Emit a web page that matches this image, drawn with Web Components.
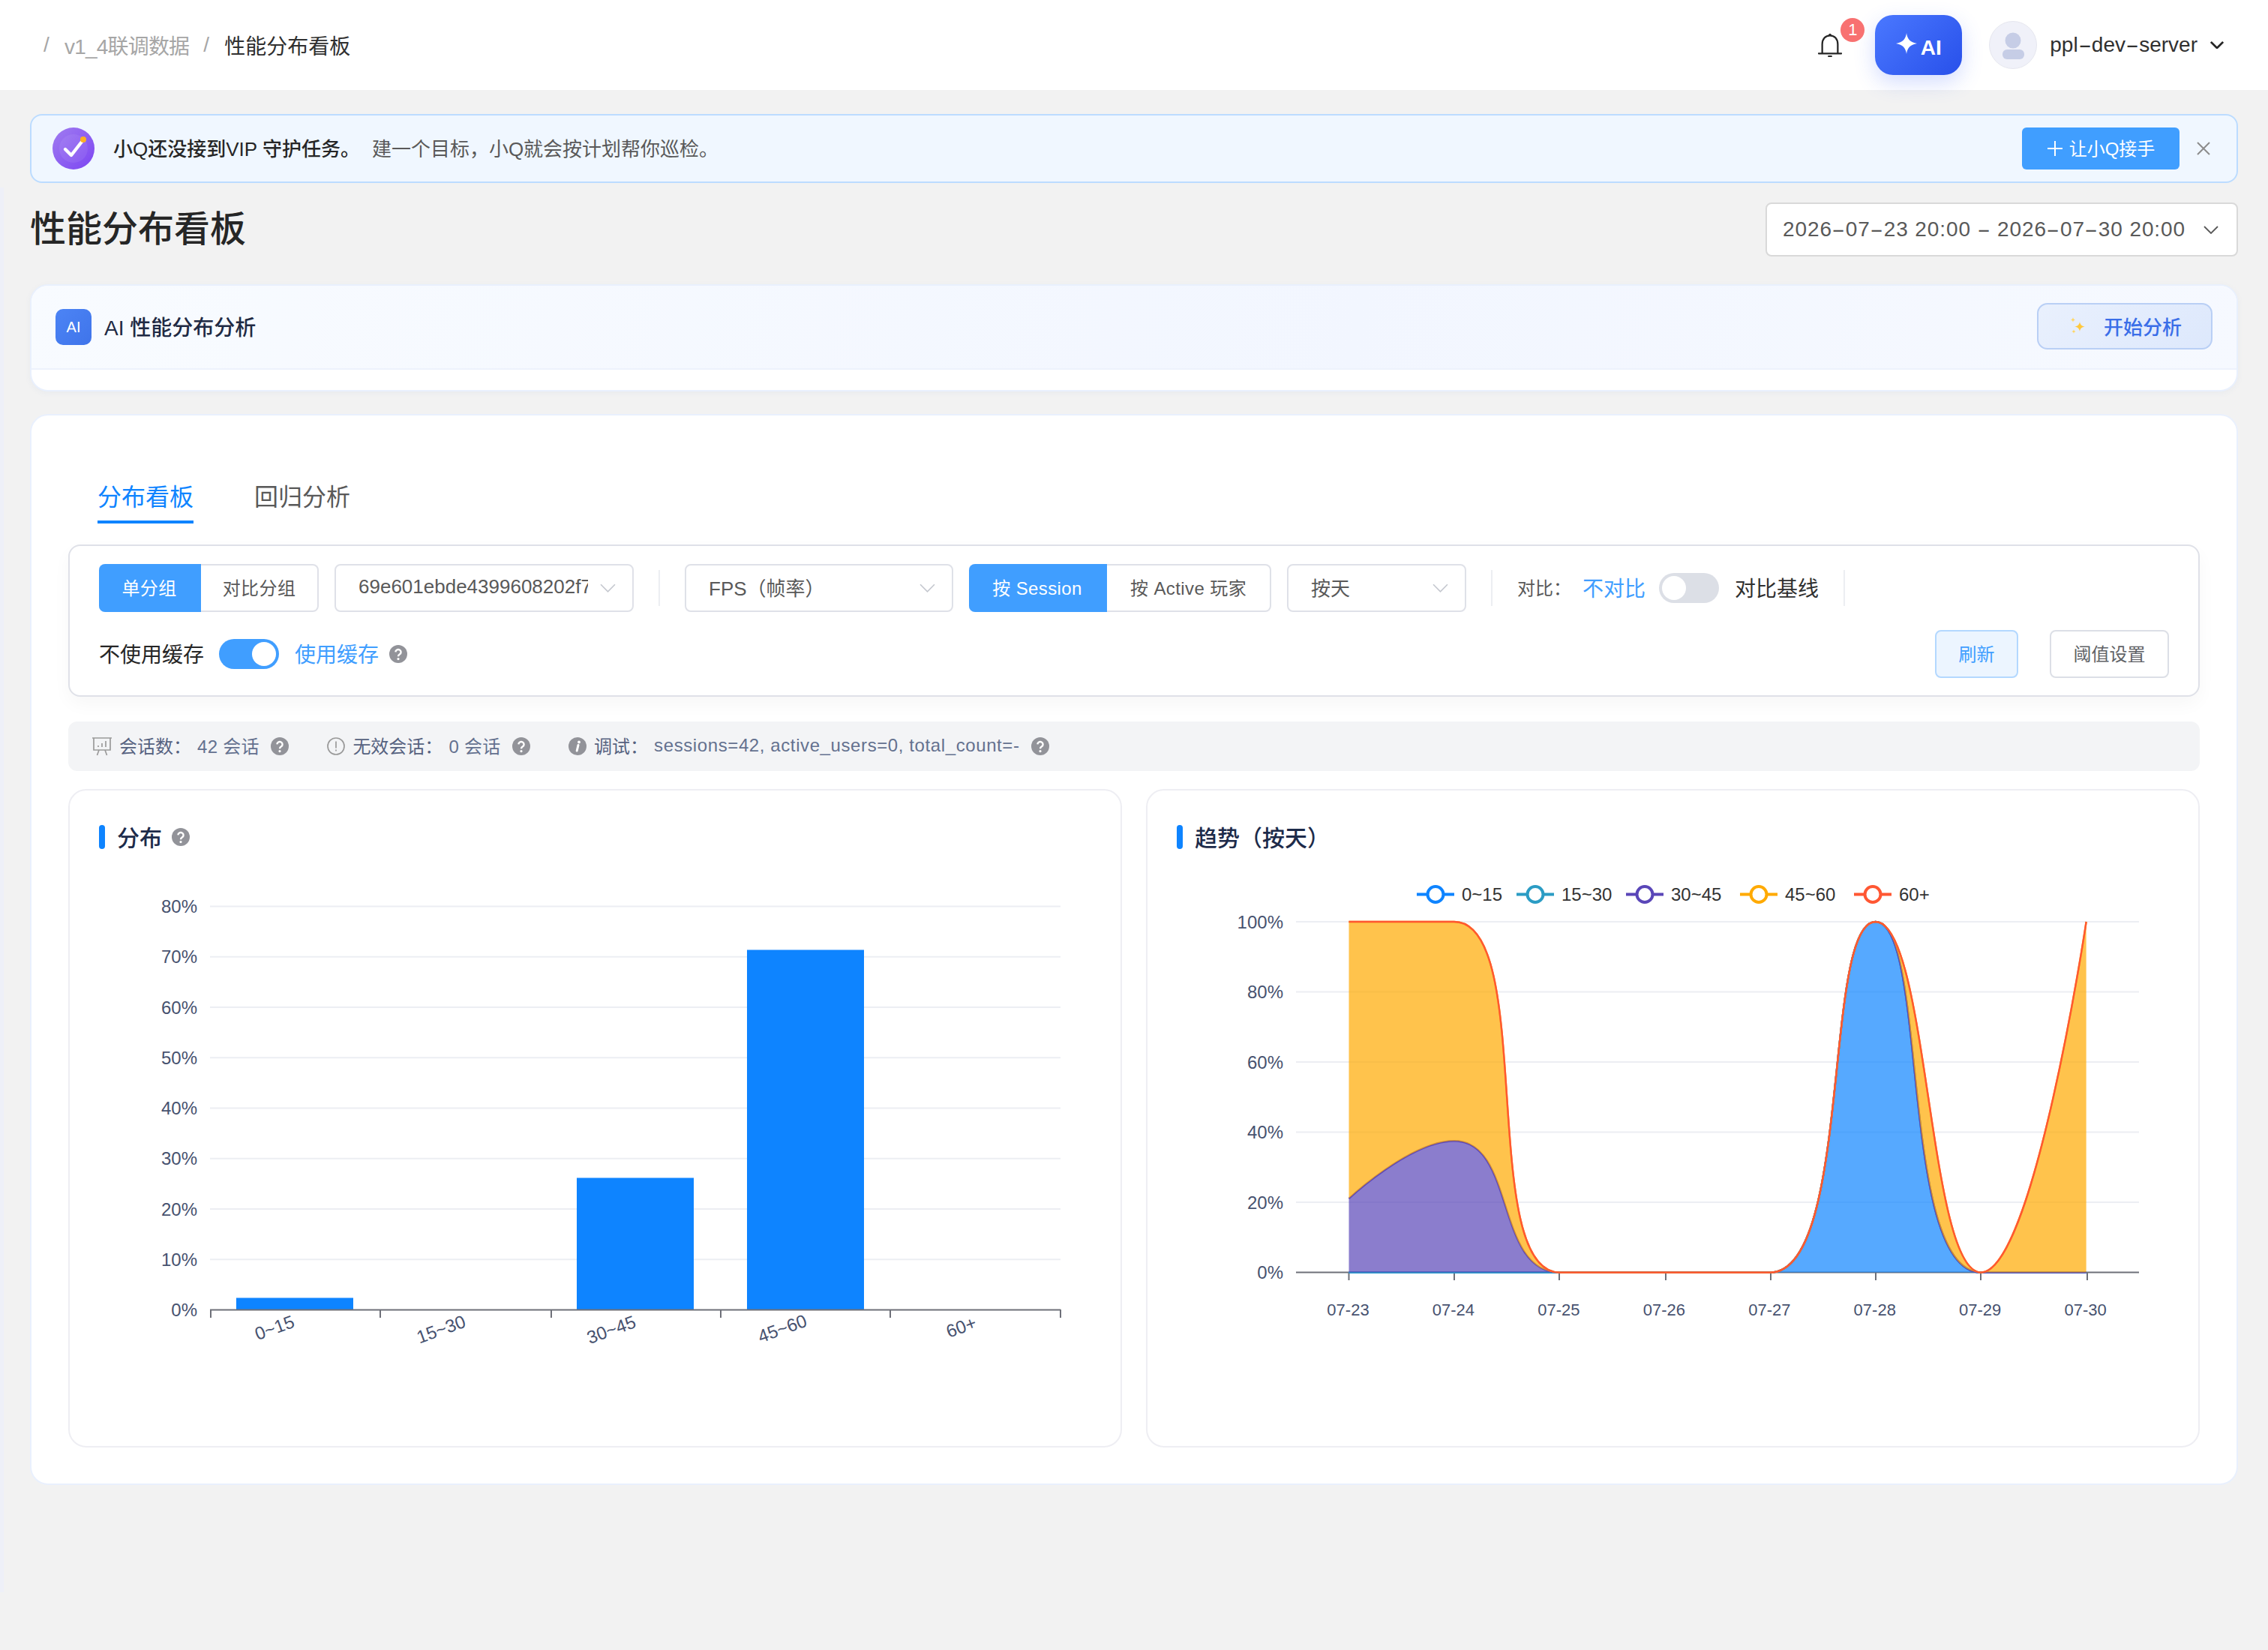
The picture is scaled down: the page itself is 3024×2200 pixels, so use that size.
<!DOCTYPE html>
<html lang="zh-CN">
<head>
<meta charset="utf-8">
<title>性能分布看板</title>
<style>
html,body{margin:0;padding:0;background:#f2f2f2}
body{font-family:"Liberation Sans","Noto Sans CJK SC",sans-serif;font-size:24px;color:#262626}
</style>
</head>
<body>
<app-shell>
  <top-bar></top-bar>
  <notice-banner></notice-banner>
  <page-head></page-head>
  <ai-card></ai-card>
  <panel-card>
    <ui-tabs></ui-tabs>
    <filter-box></filter-box>
    <stats-bar></stats-bar>
    <chart-row>
      <chart-card title-text="分布" help><bar-chart></bar-chart></chart-card>
      <chart-card title-text="趋势（按天）"><trend-chart></trend-chart></chart-card>
    </chart-row>
  </panel-card>
</app-shell>
<script>
const HELP = s => `<svg width="${s}" height="${s}" viewBox="0 0 24 24" style="flex:none;display:block"><circle cx="12" cy="12" r="12" fill="#929399"/><path d="M8.4 9.4a3.6 3.4 0 1 1 5.6 2.9c-1.3.8-2 1.4-2 2.9" fill="none" stroke="#fff" stroke-width="2.4"/><circle cx="12" cy="18.6" r="1.6" fill="#fff"/></svg>`;
const CHEV = (w,c,sw=2) => `<svg width="${w}" height="${Math.round(w*.56)}" viewBox="0 0 20 11" style="flex:none;display:block"><path d="M1 1l9 9 9-9" fill="none" stroke="${c}" stroke-width="${sw}"/></svg>`;
function def(name, css, html, extra){
  customElements.define(name, class extends HTMLElement{
    constructor(){super();const r=this.attachShadow({mode:'open'});
      r.innerHTML=`<style>${css}</style>`+(typeof html==='function'?html(this):html);}
    connectedCallback(){ if(extra) extra(this); }
  });
}

def('app-shell',`:host{display:block;width:3024px;min-height:2200px;background:linear-gradient(#eef0f8,#eef0f8) 0 250px/5px 1873px no-repeat #f2f2f2}
`,`<slot></slot>`);

def('top-bar',`:host{display:flex;align-items:center;height:120px;background:#fff;position:relative;z-index:1;font-size:28px}
.crumbs{display:flex;align-items:center;margin-left:58px;color:#a6a6a6;flex:1}
.s{width:12px;margin-right:16px}.s+span{margin-right:19px}
.v{letter-spacing:-.8px}
.cur{color:#303030}
.bell{position:relative;width:42px;height:40px;margin-right:40px}
.badge{position:absolute;left:32px;top:-16px;width:32px;height:32px;border-radius:50%;background:#f87171;color:#fff;font-size:22px;display:flex;align-items:center;justify-content:center}
.ai{width:116px;height:80px;border-radius:24px;background:linear-gradient(135deg,#4a78ff,#2850ea);box-shadow:0 10px 28px rgba(60,100,250,.22);display:flex;align-items:flex-end;justify-content:center;color:#fff;font-weight:700;font-size:28px;line-height:1;margin-right:36px;box-sizing:border-box;padding-bottom:22px;gap:5px;margin-left:-4px}
.ai svg{margin-bottom:6px}
.av{width:64px;height:64px;border-radius:50%;background:#f0f1f9;border:1px solid #e6e7ef;box-sizing:border-box;margin-right:17px}
.u{color:#303030;margin-right:17px}
.h{display:inline-block;width:.65em;text-align:center;transform:scaleX(1.9)}
.car{margin-right:59px}
`,`<div class="crumbs"><span class="s">/</span><span class="v">v1_4联调数据</span><span class="s">/</span><span class="cur">性能分布看板</span></div>
<div class="bell"><svg width="32" height="32" viewBox="0 0 34 34" style="position:absolute;left:2px;top:4px"><path d="M1 29h32" stroke="#262626" stroke-width="2.4" stroke-linecap="round"/><path d="M6 29V16C6 8.5 10.5 3.5 17 3.5S28 8.5 28 16V29" fill="none" stroke="#262626" stroke-width="2.4"/><circle cx="17" cy="2.6" r="1.8" fill="#262626"/><path d="M15 33h4" stroke="#262626" stroke-width="2.2" stroke-linecap="round"/></svg><span class="badge">1</span></div>
<div class="ai"><svg width="28" height="28" viewBox="0 0 28 28"><path d="M14 0C15 8 19 12.4 28 14 19 15.6 15 20 14 28 13 20 9 15.6 0 14 9 12.4 13 8 14 0Z" fill="#fff"/></svg><span>AI</span></div>
<div class="av"><svg width="62" height="62" viewBox="0 0 62 62"><circle cx="31" cy="25" r="10.5" fill="#c6cde6"/><rect x="17" y="37" width="29" height="13" rx="6" fill="#c6cde6"/></svg></div>
<span class="u">ppl<span class="h">-</span>dev<span class="h">-</span>server</span>
<span class="car">${CHEV(18,'#262626',3)}</span>`);

def('notice-banner',`:host{display:flex;align-items:center;box-sizing:border-box;height:92px;margin:32px 40px 0;background:#f0f7ff;border:2px solid #bcdcff;border-radius:16px;font-size:26px}
.ic{margin-left:28px;margin-right:25px;flex:none;display:block}
.a{font-weight:500;color:#262626;margin:0 16px 4px 0}
.m{color:#595959;flex:1;margin-bottom:4px}
.btn{width:210px;height:56px;background:#409eff;color:#fff;border-radius:6px;display:flex;align-items:center;justify-content:center;gap:8px;font-size:24px}
.btn span{margin-bottom:3px}
.x{margin:0 35px 0 23px;display:block}
`,`<svg class="ic" width="56" height="56" viewBox="0 0 56 56"><defs><linearGradient id="g" x1="0" y1="0" x2="1" y2="1"><stop offset="0" stop-color="#a07cf0"/><stop offset="1" stop-color="#7c45f2"/></linearGradient></defs><circle cx="28" cy="28" r="28" fill="url(#g)"/><circle cx="28" cy="28" r="19" fill="#fff" opacity=".07"/><path d="M17 29l8 8 14-18" fill="none" stroke="#fff" stroke-width="4.4" stroke-linecap="round" stroke-linejoin="round"/><circle cx="41" cy="16" r="4" fill="#ffb020"/></svg>
<span class="a">小Q还没接到VIP 守护任务。</span><span class="m">建一个目标，小Q就会按计划帮你巡检。</span>
<div class="btn"><svg width="22" height="22" viewBox="0 0 22 22"><path d="M11 1v20M1 11h20" stroke="#fff" stroke-width="2"/></svg><span>让小Q接手</span></div>
<svg class="x" width="18" height="18" viewBox="0 0 18 18"><path d="M1 1l16 16M17 1L1 17" stroke="#8c8c8c" stroke-width="2"/></svg>`);

def('page-head',`:host{display:flex;align-items:center;justify-content:space-between;margin:26px 40px 0;height:72px}
h1{margin:0;font-size:48px;font-weight:500;color:#262626;line-height:72px}
.d{box-sizing:border-box;width:630px;height:72px;background:#fff;border:2px solid #d9d9d9;border-radius:8px;display:flex;align-items:center;padding:0 24px 0 21px;font-size:28px;color:#595959;justify-content:space-between;letter-spacing:.9px}
.h{display:inline-block;width:.64em;text-align:center;transform:scaleX(1.9)}
`,`<h1>性能分布看板</h1><div class="d"><span>2026<span class="h">-</span>07<span class="h">-</span>23 20:00 <span class="h">-</span> 2026<span class="h">-</span>07<span class="h">-</span>30 20:00</span>${CHEV(20,'#595959',1.8)}</div>`);

def('ai-card',`:host{display:block;box-sizing:border-box;height:143px;margin:37px 40px 0;background:#fff;border:2px solid #e9f0fd;border-radius:24px;box-shadow:0 2px 8px rgba(60,90,160,.05);overflow:hidden}
.hd{box-sizing:border-box;height:112px;background:linear-gradient(100deg,#f8fbff,#f2f6ff 60%,#f6f9ff);border-bottom:2px solid #edf2fd;display:flex;align-items:center;padding:0 32px 0 32px}
.i{width:48px;height:48px;border-radius:10px;background:linear-gradient(135deg,#4c84f5,#3f74ea);color:#fff;font-size:20px;display:flex;align-items:center;justify-content:center;margin-right:17px}
.t{font-size:28px;font-weight:500;color:#1f2a44;flex:1;margin-bottom:3px}
.b{box-sizing:border-box;width:234px;height:62px;border-radius:14px;background:linear-gradient(135deg,#e9f0fd,#dde8fc);border:2px solid #b9cff5;display:flex;align-items:center;padding-left:41px;color:#3a6ee8;font-size:26px;font-weight:500;gap:22px;margin-bottom:2px}
.b span{margin-bottom:2px}
`,`<div class="hd"><div class="i">AI</div><div class="t">AI 性能分布分析</div><div class="b"><svg width="24" height="26" viewBox="0 0 24 26"><path d="M14 7c.6 4 2.5 5.7 7 6.5-4.5.8-6.4 2.5-7 6.5-.6-4-2.5-5.700-7-6.500 4.500-.8 6.400-2.500 7-6.500Z" fill="#ffc83d"/><path d="M5 1c.3 2 1 3 3 3.400-2 .4-2.700 1.400-3 3.400-.3-2-1-3-3-3.400 2-.4 2.700-1.400 3-3.400ZM6 17c.2 1.800.9 2.600 2.600 3-1.700.4-2.400 1.200-2.600 3-.2-1.800-.9-2.600-2.600-3 1.700-.4 2.400-1.200 2.600-3Z" fill="#ffd766"/></svg><span>开始分析</span></div></div>`);

def('panel-card',`:host{display:block;box-sizing:border-box;height:1428px;margin:30px 40px 0;background:#fff;border:2px solid #e9f0fd;border-radius:24px;padding:84px 49px 0}`,`<slot></slot>`);

def('ui-tabs',`:host{display:flex;padding-left:39px;gap:81px;font-size:32px;line-height:44px}
.t{padding:3px 0 9px;border-bottom:4px solid transparent;color:#595959}
.on{color:#0e84ff;border-color:#0e84ff}`,
`<div class="t on">分布看板</div><div class="t">回归分析</div>`);

def('seg-group',`:host{display:flex;height:64px;box-sizing:border-box;font-size:24px;color:#595959;letter-spacing:.4px}
.o{display:flex;align-items:center;justify-content:center;box-sizing:border-box;border:2px solid #dfe1e8;border-left:0;background:#fff;padding-bottom:3px}
.o:last-child{border-radius:0 8px 8px 0}
.on{background:#409eff;color:#fff;border-color:#409eff;border-radius:8px 0 0 8px}
`,el=>{
  const [a,b]=el.getAttribute('labels').split('|');const [w1,w2]=el.getAttribute('widths').split(',');
  return `<div class="o on" style="width:${w1}px">${a}</div><div class="o" style="width:${w2}px">${b}</div>`;
});

def('ui-select',`:host{display:flex;align-items:center;box-sizing:border-box;height:64px;border:2px solid #dfe1e8;border-radius:8px;padding:0 22px 0 30px;font-size:26px;color:#595959;background:#fff}
.t{flex:1;overflow:hidden;white-space:nowrap;min-width:0;margin-bottom:3px}
svg{margin-left:16px}`,()=>`<span class="t"><slot></slot></span>${CHEV(21,'#c5c8cf',1.6)}`);

def('ui-switch',`:host{display:block;width:80px;height:40px;border-radius:20px;background:#dcdfe6;position:relative;flex:none}
:host([on]){background:#409eff}
i{position:absolute;top:4px;left:4px;width:32px;height:32px;border-radius:50%;background:#fff}
:host([on]) i{left:44px}`,`<i></i>`);

def('filter-box',`:host{display:block;box-sizing:border-box;height:203px;margin-top:28px;border:2px solid #dfe1e8;border-radius:16px;padding:24px 39px 0;background:#fff;box-shadow:0 10px 24px rgba(0,0,0,.035)}
.r1{display:flex;align-items:center;gap:21px;height:64px}
.r2{display:flex;align-items:center;height:64px;margin-top:24px;font-size:28px}
.r2>span.tx{margin-bottom:3px}
.sep{width:2px;height:48px;background:#eceef2;margin:0 12px}
.cmp{display:flex;align-items:center;font-size:28px;color:#303030}
.cmp>span{margin-bottom:3px}
.lb{font-size:24px;color:#595959;width:87px}
.bl{color:#409eff}
.btn{box-sizing:border-box;height:64px;border-radius:8px;display:flex;align-items:center;justify-content:center;font-size:24px;border:2px solid #dcdfe6;color:#606266;background:#fff;padding-bottom:3px}
.pri{background:#ecf5ff;border-color:#b3d8ff;color:#409eff}
`,`<div class="r1">
<seg-group labels="单分组|对比分组" widths="136,157"></seg-group>
<ui-select style="width:399px">69e601ebde4399608202f7</ui-select>
<div class="sep"></div>
<ui-select style="width:358px">FPS（帧率）</ui-select>
<seg-group labels="按 Session|按 Active 玩家" widths="184,219"></seg-group>
<ui-select style="width:239px">按天</ui-select>
<div class="sep"></div>
<div class="cmp"><span class="lb">对比：</span><span class="bl" style="width:84px">不对比</span><ui-switch style="margin:0 21px 0 18px"></ui-switch><span style="width:112px">对比基线</span></div>
<div class="sep"></div>
</div>
<div class="r2"><span class="tx">不使用缓存</span><ui-switch on style="margin:0 21px 0 20px"></ui-switch><span class="bl tx">使用缓存</span><span style="margin-left:14px">${HELP(24)}</span>
<span style="flex:1"></span><div class="btn pri" style="width:111px">刷新</div><div class="btn" style="width:159px;margin-left:42px">阈值设置</div></div>`);

def('stat-item',`:host{display:flex;align-items:center;color:#566280;flex:none}
.l{font-weight:400;margin:0 8px 3px 0}
.ic{display:block;margin-right:10px}
.v{color:#64718f;margin:0 15px 3px 0;letter-spacing:var(--ls,.3px)}
`,el=>`<span class="ic"><slot name="icon"></slot></span><span class="l">${el.getAttribute('label')}</span><span class="v"><slot></slot></span>${HELP(24)}`);

def('stats-bar',`:host{display:flex;align-items:center;box-sizing:border-box;height:66px;margin-top:33px;background:#f3f4f6;border-radius:12px;padding-left:32px;gap:51.5px;font-size:24px}
svg{display:block}`,
`<stat-item label="会话数："><svg slot="icon" width="26" height="26" viewBox="0 0 26 26" fill="none" stroke="#9a9a9a" stroke-width="1.700"><path d="M0 2h26M2 2v16h22V2M9 18l-2.500 7M17 18l2.500 7"/><path d="M8 14v-2M13 14V9M18 14V6"/></svg>42 会话</stat-item>
<stat-item label="无效会话："><svg slot="icon" width="24" height="24" viewBox="0 0 24 24" fill="none" stroke="#9a9a9a" stroke-width="1.700"><circle cx="12" cy="12" r="11"/><path d="M12 5.500v9M12 16.500v2"/></svg>0 会话</stat-item>
<stat-item label="调试：" style="--ls:.6px"><svg slot="icon" width="24" height="24" viewBox="0 0 24 24"><circle cx="12" cy="12" r="12" fill="#929399"/><path d="M13 10.500l-1.800 7.500" stroke="#fff" stroke-width="3" stroke-linecap="round"/><circle cx="14" cy="6.500" r="1.900" fill="#fff"/></svg>sessions=42, active_users=0, total_count=-</stat-item>`);

def('chart-row',`:host{display:grid;grid-template-columns:1fr 1fr;gap:32px;margin-top:24px}`,`<slot></slot>`);

def('chart-card',`:host{display:block;box-sizing:border-box;height:878px;border:2px solid #eeeef3;border-radius:24px;background:#fff}
.h{display:flex;align-items:center;height:32px;padding:46px 0 0 39px}
.bar{width:8px;height:32px;border-radius:4px;background:#0e84ff;margin-right:16px}
.t{font-size:30px;font-weight:500;color:#1d2b4a;margin:0 13px 3px 0}
`,el=>`<div class="h"><i class="bar"></i><span class="t">${el.getAttribute('title-text')}</span>${el.hasAttribute('help')?HELP(24):''}</div><slot></slot>`);

const CHART_CSS=`:host{display:block;margin-top:8px}svg{display:block}text{font-family:"Liberation Sans","Noto Sans CJK SC",sans-serif}`;

def('bar-chart',CHART_CSS,()=>{
  let s=`<svg width="1401" height="788" viewBox="93 1140 1401 788">`;
  for(let i=0;i<=8;i++){const y=1746.5-i*67.25;
    if(i)s+=`<path d="M280 ${y}H1414" stroke="#eceef3" stroke-width="2"/>`;
    s+=`<text x="263" y="${y}" dy=".36em" text-anchor="end" font-size="24" fill="#47526f">${i*10}%</text>`;}
  [[315,1730.5],[769,1570.5],[996,1266.5]].forEach(([x,t])=>{s+=`<rect x="${x}" y="${t}" width="156" height="${1746-t}" fill="#0e84ff"/>`;});
  s+=`<path d="M280 1746.500H1414" stroke="#6e7079" stroke-width="2"/>`;
  [281,507,735,961,1187,1414].forEach(x=>{s+=`<path d="M${x} 1746V1757" stroke="#6e7079" stroke-width="2"/>`;});
  [['0~15',366,1770],['15~30',588,1772],['30~45',815,1772.5],['45~60',1043,1771],['60+',1281.500,1769]].forEach(([t,x,y])=>{
    s+=`<text x="${x}" y="${y}" dy=".36em" text-anchor="middle" font-size="24" fill="#47526f" transform="rotate(-20 ${x} ${y})">${t}</text>`;});
  return s+`</svg>`;
});

function smoothPath(pts,smooth){
  let d='',px,py,cx0,cy0,nc0x,nc0y;
  const mn=Math.min,mx=Math.max,n=pts.length;
  for(let k=0;k<n;k++){
    const [x,y]=pts[k];
    if(k===0){d+=`M${x} ${y}`;cx0=x;cy0=y;px=x;py=y;continue;}
    let cx1,cy1;
    if(k+1>=n){cx1=x;cy1=y;nc0x=x;nc0y=y;}
    else{
      const [nx,ny]=pts[k+1];
      let vx=nx-px,vy=ny-py;
      const lp=Math.hypot(x-px,y-py),ln=Math.hypot(nx-x,ny-y);
      const r=ln/(ln+lp);
      nc0x=x+vx*smooth*r;nc0y=y+vy*smooth*r;
      nc0x=mx(mn(nc0x,mx(nx,x)),mn(nx,x));
      nc0y=mx(mn(nc0y,mx(ny,y)),mn(ny,y));
      vx=nc0x-x;vy=nc0y-y;
      cx1=x-vx*lp/ln;cy1=y-vy*lp/ln;
      cx1=mx(mn(cx1,mx(px,x)),mn(px,x));
      cy1=mx(mn(cy1,mx(py,y)),mn(py,y));
      vx=x-cx1;vy=y-cy1;
      nc0x=x+vx*ln/lp;nc0y=y+vy*ln/lp;
    }
    d+=`C${cx0.toFixed(2)} ${cy0.toFixed(2)} ${cx1.toFixed(2)} ${cy1.toFixed(2)} ${x} ${y}`;
    cx0=nc0x;cy0=nc0y;px=x;py=y;
  }
  return d;
}

def('trend-chart',CHART_CSS,()=>{
  const X=i=>1798.5+i*140.45, Y=v=>1696.6-v*4.676;
  const colors=['#0e84ff','#2b9cc4','#5a46b8','#ffaa00','#ff5733'];
  const names=['0~15','15~30','30~45','45~60','60+'];
  const data=[[0,0,0,0,0,100,0,0],[0,0,0,0,0,0,0,0],[21.05,37.5,0,0,0,0,0,0],[78.95,62.5,0,0,0,0,0,100],[0,0,0,0,0,0,0,0]];
  let s=`<svg width="1401" height="788" viewBox="1530 1140 1401 788">`;
  for(let i=0;i<=5;i++){const y=Y(i*20);
    if(i)s+=`<path d="M1728 ${y}H2852" stroke="#eceef3" stroke-width="2"/>`;
    s+=`<text x="1711" y="${y}" dy=".36em" text-anchor="end" font-size="24" fill="#47526f">${i*20}%</text>`;}
  s+=`<path d="M1728 1696.600H2852" stroke="#6e7079" stroke-width="2"/>`;
  [1798.5,1939,2079,2221,2361,2501,2641,2783].forEach(x=>{s+=`<path d="M${x} 1697V1707" stroke="#6e7079" stroke-width="2"/>`;});
  const base=new Array(8).fill(0);
  colors.forEach((c,si)=>{
    const top=base.map((b,i)=>b+data[si][i]);
    const upper=top.map((v,i)=>[+X(i).toFixed(2),+Y(v).toFixed(2)]);
    const lower=base.map((v,i)=>[+X(i).toFixed(2),+Y(v).toFixed(2)]).reverse();
    const up=smoothPath(upper,.5);
    const lowD=smoothPath(lower,.5);
    s+=`<path d="${up}L${lower[0].join(' ')}${lowD.replace(/^M[^C]+/,'')}Z" fill="${c}" fill-opacity=".7"/>`;
    s+=`<path d="${up}" fill="none" stroke="${c}" stroke-width="2.400"/>`;
    top.forEach((v,i)=>base[i]=v);
  });
  ['07-23','07-24','07-25','07-26','07-27','07-28','07-29','07-30'].forEach((t,i)=>{
    s+=`<text x="${X(i)-1}" y="1746" dy=".36em" text-anchor="middle" font-size="22" fill="#47526f">${t}</text>`;});
  [1889,2022,2168,2320,2472].forEach((x,i)=>{
    s+=`<path d="M${x} 1192.500h50" stroke="${colors[i]}" stroke-width="4"/><circle cx="${x+25}" cy="1192.500" r="10.500" fill="#fff" stroke="${colors[i]}" stroke-width="4"/>`;
    s+=`<text x="${x+60}" y="1192.500" dy=".36em" font-size="24" fill="#333">${names[i]}</text>`;});
  return s+`</svg>`;
});
</script>
</body>
</html>
